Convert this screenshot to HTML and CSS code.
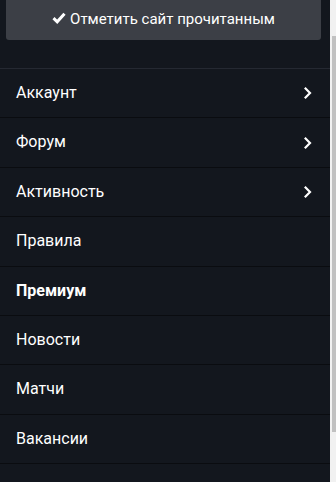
FILE: index.html
```html
<!DOCTYPE html>
<html lang="ru">
<head>
<meta charset="utf-8">
<link rel="stylesheet" href="styles.css">
</head>
<body>
<div class="page">
  <main class="panel">
    <a class="mark-read" href="#">
      <svg class="check" width="14" height="12" viewBox="0 0 14 12"><path d="M1.5 6.2 L5.2 9.8 L12.5 1.8" fill="none" stroke="#fff" stroke-width="3"/></svg>
      Отметить сайт прочитанным
    </a>
    <ul class="menu">
      <li class="item"><span>Аккаунт</span><svg class="chev" width="9" height="14" viewBox="0 0 9 14"><path d="M1.8 1.8 L7 7 L1.8 12.2" fill="none" stroke="#fff" stroke-width="2.2"/></svg></li>
      <li class="item"><span>Форум</span><svg class="chev" width="9" height="14" viewBox="0 0 9 14"><path d="M1.8 1.8 L7 7 L1.8 12.2" fill="none" stroke="#fff" stroke-width="2.2"/></svg></li>
      <li class="item"><span>Активность</span><svg class="chev" width="9" height="14" viewBox="0 0 9 14"><path d="M1.8 1.8 L7 7 L1.8 12.2" fill="none" stroke="#fff" stroke-width="2.2"/></svg></li>
      <li class="item"><span>Правила</span></li>
      <li class="item bold"><span>Премиум</span></li>
      <li class="item"><span>Новости</span></li>
      <li class="item"><span>Матчи</span></li>
      <li class="item"><span>Вакансии</span></li>
      <li class="item"><span>&nbsp;</span></li>
    </ul>
  </main>
  <div class="scrollbar"><div class="thumb"></div></div>
</div>
</body>
</html>
```
FILE: styles.css
```css
html, body {
  margin: 0;
  padding: 0;
  background: #13171e;
  overflow: hidden;
}
body {
  font-family: Roboto, "Noto Sans", sans-serif;
  color: #fff;
}
.page {
  display: flex;
  width: 336px;
  height: 482px;
}
.panel {
  flex: 1;
  min-width: 0;
}
.mark-read {
  display: flex;
  align-items: center;
  justify-content: center;
  gap: 4px;
  margin: 0 9px 0 6px;
  height: 40px;
  box-sizing: border-box;
  padding: 0 0 3px 0;
  background: #3c3f46;
  border-radius: 0 0 3px 3px;
  color: #fff;
  text-decoration: none;
  font-size: 15px;
  line-height: 20px;
}
.check {
  display: block;
  margin-top: -1px;
}
.menu {
  list-style: none;
  margin: 28px 0 0 0;
  padding: 0;
  border-top: 1px solid #252932;
}
.item {
  display: flex;
  align-items: center;
  justify-content: space-between;
  padding: 14px 18px 14px 16px;
  font-size: 16px;
  line-height: 20.4px;
  border-bottom: 1px solid #0a0c10;
}
.item.bold {
  font-weight: 700;
}
.chev {
  display: block;
}
.scrollbar {
  width: 6px;
  background: #f1f1f1;
  display: flex;
  flex-direction: column;
  align-items: flex-end;
}
.thumb {
  width: 4px;
  height: 396px;
  margin-top: 36px;
  background: #c1c1c1;
}
```
